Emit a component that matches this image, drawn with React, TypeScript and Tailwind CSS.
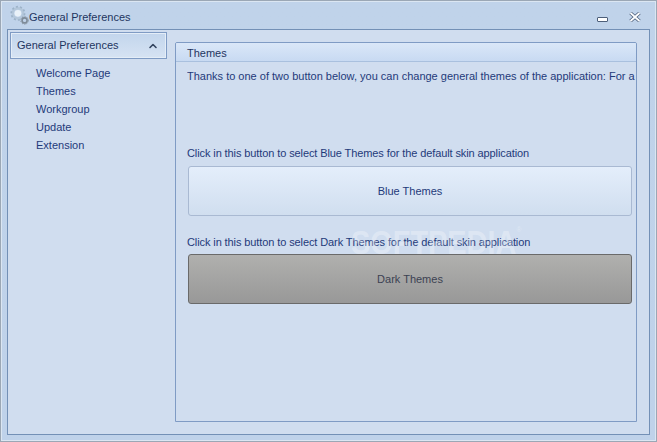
import { ChevronUp } from 'lucide-react';

const NAV_ITEMS = ['Welcome Page', 'Themes', 'Workgroup', 'Update', 'Extension'];

function GearIcon() {
  return (
    <svg width="20" height="20" viewBox="0 0 24 24" className="shrink-0">
      <circle cx="9.5" cy="10" r="6.2" fill="none" stroke="#b4c7da" strokeWidth="3" />
      <circle cx="9.5" cy="10" r="8" fill="none" stroke="#9db3c9" strokeWidth="2" strokeDasharray="2.5 2.5" />
      <circle cx="9.5" cy="10" r="4" fill="#e9f1f8" />
      <circle cx="17.5" cy="18.5" r="3" fill="none" stroke="#7f8c99" strokeWidth="2" />
      <circle cx="17.5" cy="18.5" r="4.6" fill="none" stroke="#8a97a4" strokeWidth="1.2" strokeDasharray="1.5 1.5" />
    </svg>
  );
}

function TitleBar() {
  return (
    <div className="h-[28px] shrink-0 flex items-center pl-[9px] pr-[15px]">
      <GearIcon />
      <span className="ml-[-1px] mt-[5px] text-[#1e3560]">General Preferences</span>
      <div className="ml-auto flex items-center gap-[21px] mt-[4px]">
        <div className="w-[11px] h-[5px] mt-[4px] rounded-[1px] border border-[#4d5f7a] bg-white" />
        <svg width="12" height="10" viewBox="0 0 12 10">
          <path d="M1.5 1 L10.5 9 M10.5 1 L1.5 9" stroke="#4d5f7a" strokeWidth="3.4" />
          <path d="M1.5 1 L10.5 9 M10.5 1 L1.5 9" stroke="#ffffff" strokeWidth="1.8" />
        </svg>
      </div>
    </div>
  );
}

function Sidebar() {
  return (
    <div className="w-[159px] shrink-0 pl-[2px] pt-[2px]">
      <div className="h-[27px] border border-[#7f9bc4] shadow-[inset_0_0_0_1px_#e4edf7] bg-gradient-to-b from-[#c2d5ec] to-[#d6e3f3] flex items-center pl-[6px] pr-[7px]">
        <span className="text-[#1e3560]">General Preferences</span>
        <ChevronUp className="ml-auto text-[#33445f]" size={12} strokeWidth={3.2} />
      </div>
      <ul className="mt-[5px] pl-[26px]">
        {NAV_ITEMS.map((item) => (
          <li key={item} className="h-[18px] leading-[18px] text-[#1f3a7a]">
            {item}
          </li>
        ))}
      </ul>
    </div>
  );
}

function ThemeButton({ label, dark }: { label: string; dark?: boolean }) {
  return (
    <button
      type="button"
      className={
        dark
          ? 'block w-full h-[50px] rounded-[3px] border border-[#6a6a6a] bg-gradient-to-b from-[#b0b0ae] to-[#989898] text-[#3c4252]'
          : 'block w-full h-[50px] rounded-[3px] border border-[#a9b9d2] bg-gradient-to-b from-[#e4eefb] to-[#d0deef] text-[#1f3a7a]'
      }
    >
      {label}
    </button>
  );
}

function ThemesPanel() {
  return (
    <div className="flex-1 min-w-0 ml-[8px] mt-[12px] mb-[12px] mr-[12px] rounded-t-[2px] border border-[#7f9bc4] flex flex-col overflow-hidden">
      <div className="h-[19px] shrink-0 border-b border-[#a9c0de] bg-gradient-to-b from-[#dae7f8] to-[#c8daf2] pl-[11px] pt-[1px] leading-[19px] text-[#1e3560]">
        Themes
      </div>
      <div className="flex-1 pl-[11px]">
        <p className="mt-[5px] h-[18px] leading-[18px] whitespace-nowrap overflow-hidden text-[#1f3a7a]">
          Thanks to one of two button below, you can change general themes of the application: For a better visual
        </p>
        <p className="mt-[59px] h-[18px] leading-[18px] tracking-[-0.1px] text-[#1f3a7a]">
          Click in this button to select Blue Themes for the default skin application
        </p>
        <div className="mt-[4px] pl-[1px] pr-[4px]">
          <ThemeButton label="Blue Themes" />
        </div>
        <p className="mt-[17px] h-[18px] leading-[18px] tracking-[-0.1px] text-[#1f3a7a]">
          Click in this button to select Dark Themes for the default skin application
        </p>
        <div className="mt-[3px] pl-[1px] pr-[4px]">
          <ThemeButton label="Dark Themes" dark />
        </div>
      </div>
    </div>
  );
}

export default function App() {
  return (
    <div className="relative w-[657px] h-[442px] overflow-hidden border border-[#9ba7b5] shadow-[inset_0_0_0_1px_#dbe6f2] bg-gradient-to-b from-[#c0d3ea] to-[#bfd2ea] flex flex-col font-['Liberation_Sans',sans-serif] text-[11px]">
      <TitleBar />
      <div className="flex-1 min-h-0 ml-[6px] mr-[6px] mb-[6px] border border-[#7390b6] bg-[#d0ddef] flex">
        <Sidebar />
        <ThemesPanel />
      </div>
      {/* watermark sits on top of the dark theme row */}
      <div className="absolute left-[350px] top-[223px] origin-left scale-x-[0.85] text-[34px] leading-[36px] font-bold text-white/30 whitespace-nowrap pointer-events-none">
        SOFTPEDIA
        <span className="absolute left-[100%] top-[2px] text-[8px] leading-[8px] font-normal">®</span>
      </div>
    </div>
  );
}
